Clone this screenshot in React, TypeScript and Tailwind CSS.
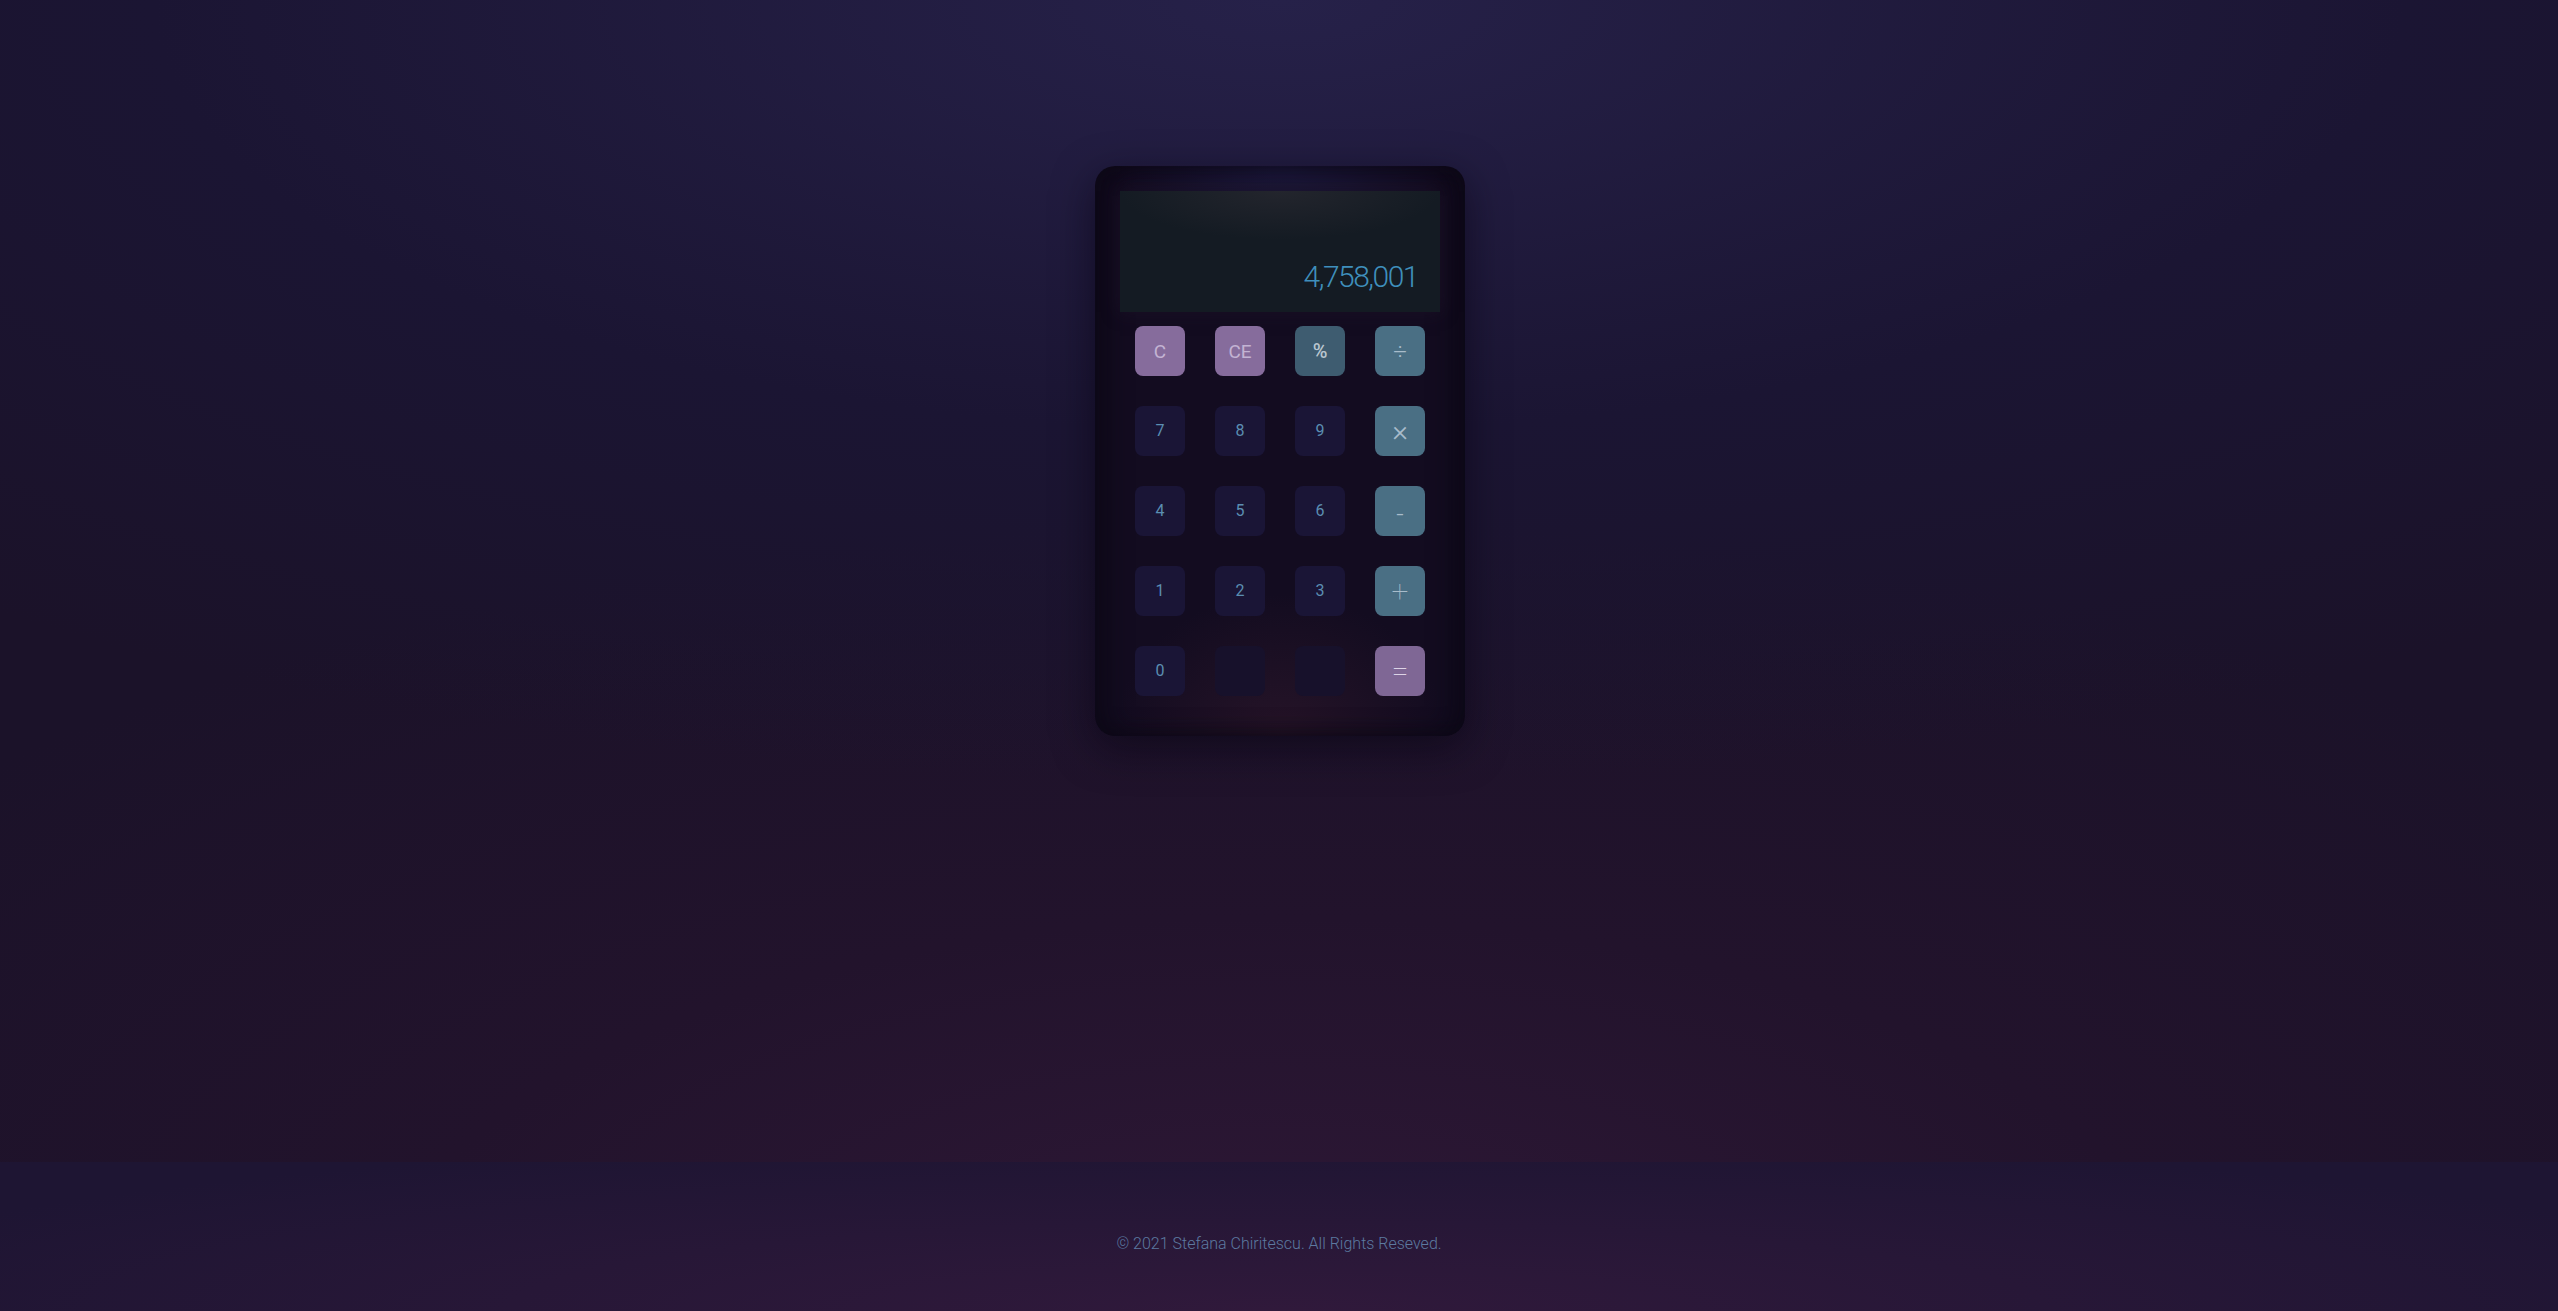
import React from "react";

type Btn = { label: string; cls: string };

const purple = "bg-[#866c9c] text-[#c3b3d3] text-[19px]";
const tealDark = "bg-[#3e5c70] text-[#b9c6cf] text-[20px] font-medium";
const teal = "bg-[#4a6f84] text-[#a8bccb] font-light";
const digit = "bg-[#1a1536] text-[#5b8eb2] text-[16px]";
const blank = "bg-[#17112b]";
const eq = "bg-[#7f6795] text-[#ddd3e6] text-[30px] font-thin";

const buttons: Btn[] = [
  { label: "C", cls: purple },
  { label: "CE", cls: purple },
  { label: "%", cls: tealDark },
  { label: "÷", cls: teal + " text-[24px]" },
  { label: "7", cls: digit },
  { label: "8", cls: digit },
  { label: "9", cls: digit },
  { label: "×", cls: teal + " text-[30px]" },
  { label: "4", cls: digit },
  { label: "5", cls: digit },
  { label: "6", cls: digit },
  { label: "-", cls: teal + " text-[26px] pt-[6px]" },
  { label: "1", cls: digit },
  { label: "2", cls: digit },
  { label: "3", cls: digit },
  { label: "+", cls: teal + " text-[30px] font-thin" },
  { label: "0", cls: digit },
  { label: "", cls: blank },
  { label: "", cls: blank },
  { label: "=", cls: eq },
];

export default function App() {
  return (
    <div
      className="w-full min-h-[1311px] flex flex-col bg-[radial-gradient(ellipse_80%_60%_at_50%_0%,#262149_0%,#1b1533_55%,transparent_100%),radial-gradient(ellipse_70%_60%_at_50%_100%,#2f1837_0%,#22132c_50%,#1b1229_100%)] bg-[#1a1229]"
      style={{ fontFamily: "Roboto, 'Liberation Sans', sans-serif" }}
    >
      <main className="h-[1162px] flex justify-center pt-[166px] pl-[2px]">
        <div className="w-[370px] h-[570px] rounded-[20px] bg-[radial-gradient(ellipse_45%_12%_at_50%_0%,#1f1c42_0%,transparent_100%),radial-gradient(ellipse_45%_25%_at_50%_100%,#261428_0%,transparent_100%)] bg-[#130c20] shadow-[0_12px_40px_rgba(8,4,16,0.55),inset_12px_0_24px_rgba(10,6,18,0.6),inset_-12px_0_24px_rgba(10,6,18,0.6)] flex flex-col items-center pt-[25px]">
          <div className="w-[320px] h-[121px] bg-[radial-gradient(ellipse_50%_40%_at_50%_0%,#23252d_0%,transparent_100%)] bg-[#141b23] shadow-[0_0_16px_rgba(30,20,40,0.6)] flex items-end justify-end pr-[22px] pb-[20px]">
            <span className="text-[30px] font-light leading-none tracking-[-1.5px] text-[#3f8fbc]">
              4,758,001
            </span>
          </div>
          <div className="mt-[14px] grid grid-cols-[repeat(4,50px)] gap-[30px]">
            {buttons.map((b, i) => (
              <div
                key={i}
                className={`w-[50px] h-[50px] rounded-[8px] flex items-center justify-center leading-none ${b.cls}`}
              >
                {b.label}
              </div>
            ))}
          </div>
        </div>
      </main>
      <footer className="h-[149px] flex items-center justify-center pt-[14px] bg-[radial-gradient(ellipse_60%_120%_at_50%_100%,#30193b_0%,#271737_50%,#1e1533_100%)]">
        <span className="text-[16px] font-light text-[#5c7aa0]">
          © 2021 Stefana Chiritescu. All Rights Reseved.
        </span>
      </footer>
    </div>
  );
}
